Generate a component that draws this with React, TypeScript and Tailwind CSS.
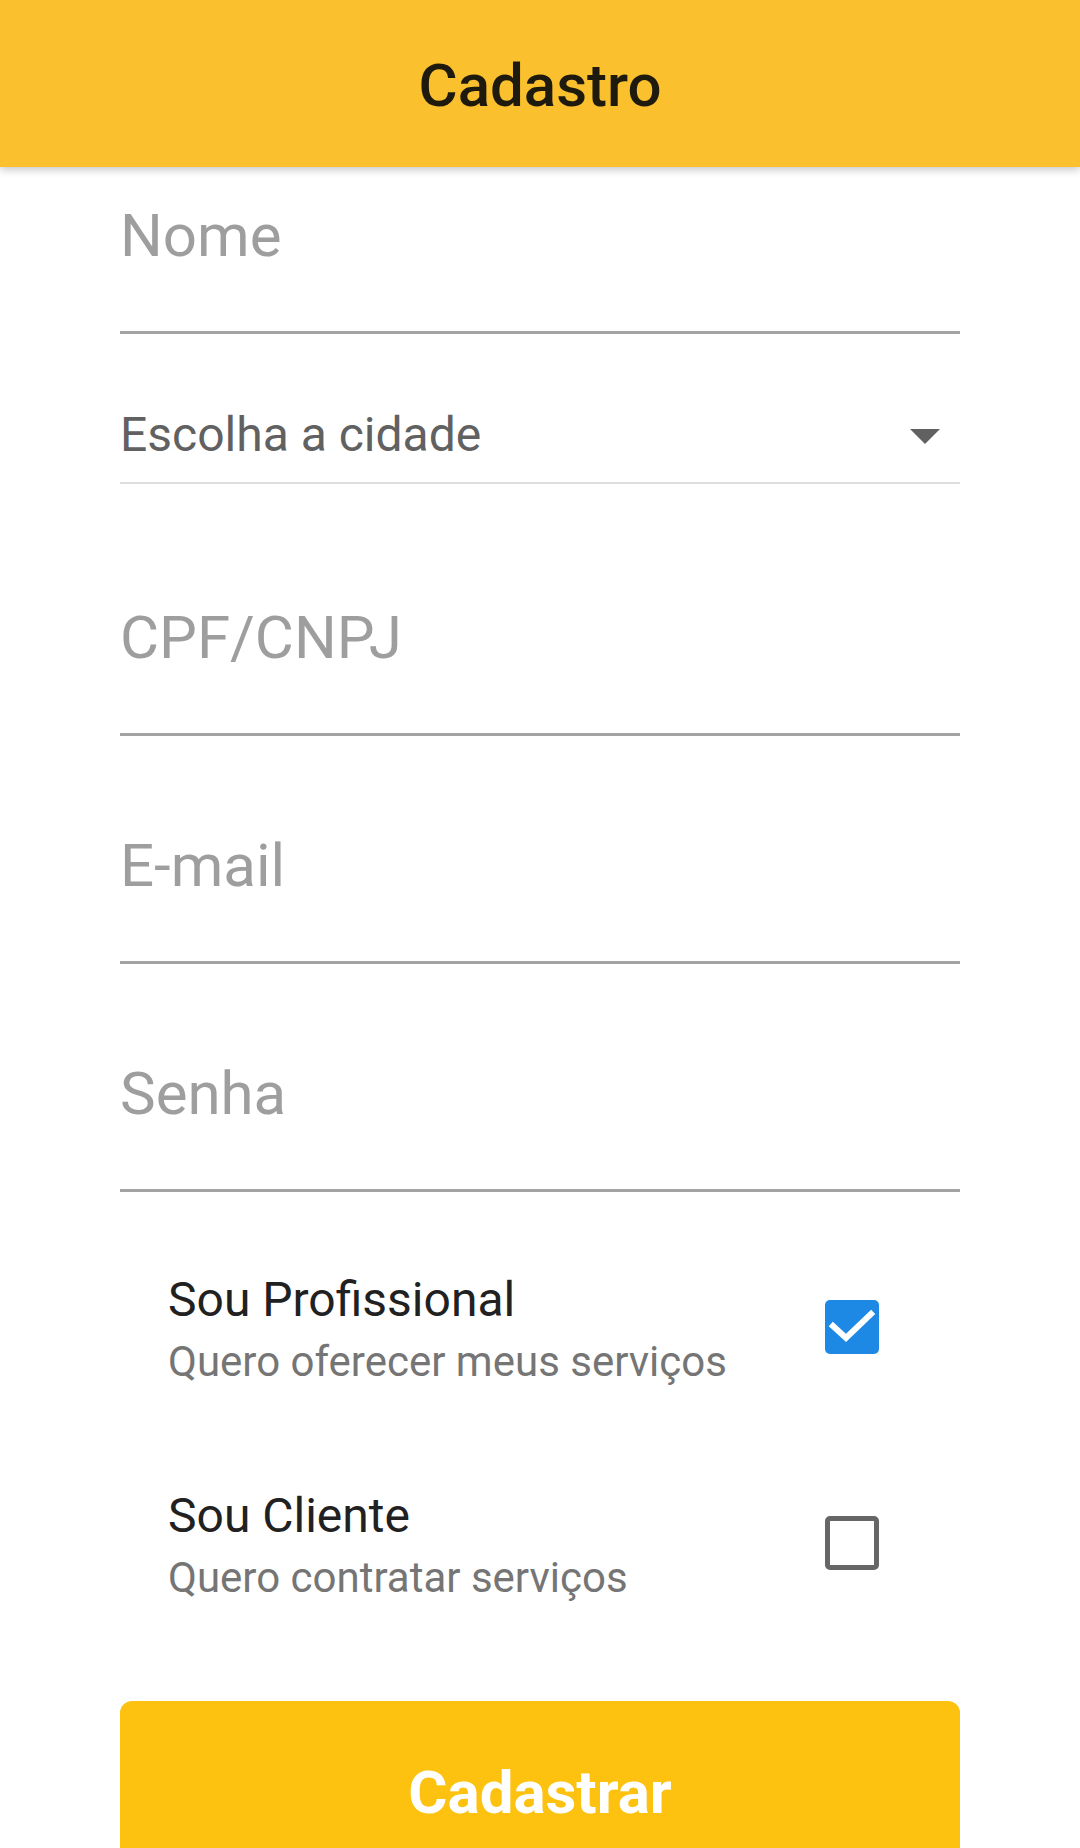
import { useState } from "react";

type FieldProps = {
  placeholder: string;
  type?: string;
  className?: string;
};

function UnderlineField({ placeholder, type = "text", className = "" }: FieldProps) {
  return (
    <div className={`border-b-[3px] border-[#a3a3a3] pb-[60px] ${className}`}>
      <input
        type={type}
        placeholder={placeholder}
        className="block h-[70px] w-full bg-transparent p-0 text-[60px] leading-[70px] text-[#212121] outline-none placeholder:text-[#9e9e9e]"
      />
    </div>
  );
}

function CheckRow({
  title,
  subtitle,
  checked,
  onToggle,
  className = "",
}: {
  title: string;
  subtitle: string;
  checked: boolean;
  onToggle: () => void;
  className?: string;
}) {
  return (
    <button
      type="button"
      onClick={onToggle}
      className={`flex w-full items-center pl-[48px] pr-[81px] text-left ${className}`}
    >
      <div className="flex-1">
        <p className="text-[48px] leading-[56px] text-[#212121]">{title}</p>
        <p className="mt-[9px] text-[42px] leading-[50px] text-[#757575]">{subtitle}</p>
      </div>
      {checked ? (
        <span className="mb-[5px] flex h-[54px] w-[54px] items-center justify-center rounded-[5px] bg-[#1e88e5]">
          <svg width="54" height="54" viewBox="0 0 54 54" fill="none">
            <polyline
              points="8,26 21,38 46,14"
              stroke="#ffffff"
              strokeWidth="6"
              strokeLinecap="square"
            />
          </svg>
        </span>
      ) : (
        <span className="mb-[5px] h-[54px] w-[54px] rounded-[5px] border-[5px] border-[#666666]" />
      )}
    </button>
  );
}

export default function App() {
  const [pro, setPro] = useState(true);
  const [client, setClient] = useState(false);

  return (
    <div className="relative h-[1848px] w-[1080px] overflow-hidden bg-white font-[Roboto,sans-serif]">
      <header className="relative z-10 flex h-[167px] items-center justify-center bg-[#fbc02d] pt-[5px] shadow-[0_3px_8px_rgba(0,0,0,0.22)]">
        <h1 className="text-[60px] font-medium text-[#1f1a0e]">Cadastro</h1>
      </header>

      <main className="px-[120px]">
        <UnderlineField placeholder="Nome" className="pt-[34px]" />

        <div className="flex items-center border-b-2 border-[#dddddd] pt-[65px] pb-[11px]">
          <span className="flex-1 text-[48px] leading-[56px] text-[#616161]">Escolha a cidade</span>
          <svg width="72" height="72" viewBox="0 0 24 24" fill="#616161" className="mr-[-1px]">
            <path d="M7 10l5 5 5-5z" />
          </svg>
        </div>

        <UnderlineField placeholder="CPF/CNPJ" className="pt-[119px]" />
        <UnderlineField placeholder="E-mail" type="email" className="pt-[95px]" />
        <UnderlineField placeholder="Senha" type="password" className="pt-[95px]" />

        <CheckRow
          title="Sou Profissional"
          subtitle="Quero oferecer meus serviços"
          checked={pro}
          onToggle={() => setPro(!pro)}
          className="mt-[80px]"
        />
        <CheckRow
          title="Sou Cliente"
          subtitle="Quero contratar serviços"
          checked={client}
          onToggle={() => setClient(!client)}
          className="mt-[101px]"
        />

        <button
          type="button"
          className="mt-[98px] flex h-[183px] w-full items-center justify-center rounded-[12px] bg-[#fdc10f] text-[60px] font-bold text-white"
        >
          Cadastrar
        </button>
      </main>
    </div>
  );
}
